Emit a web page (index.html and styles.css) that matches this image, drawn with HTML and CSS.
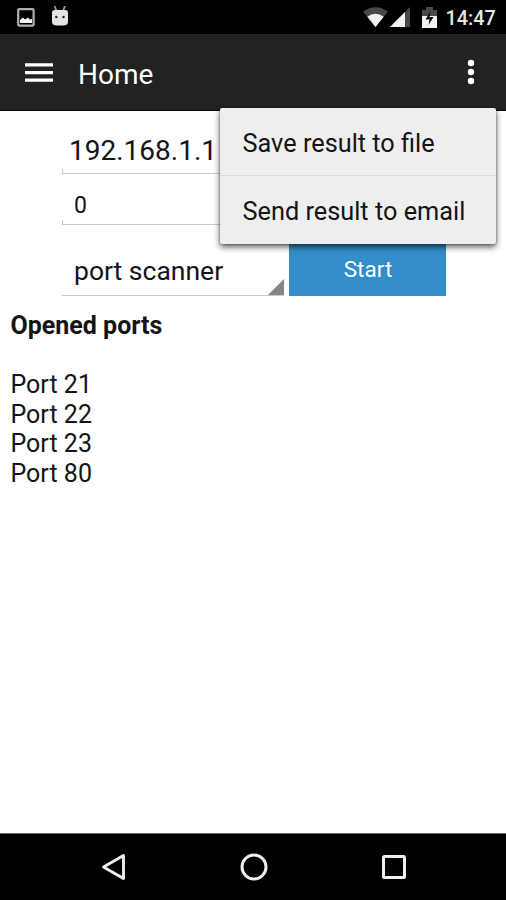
FILE: index.html
```html
<!DOCTYPE html>
<html lang="en">
<head>
<meta charset="utf-8">
<title>Home</title>
<link rel="stylesheet" href="styles.css">
</head>
<body>
<div class="screen">
  <header class="status">
    <div class="status-left">
      <svg width="18" height="19" viewBox="0 0 18 19"><rect x="1.2" y="1.2" width="15.4" height="16.4" rx="1" fill="none" stroke="#b0b0b0" stroke-width="2.200"/><path d="M3 15V12l3-2.500 2 2 3-2 1.500 2 2.500-.5V15z" fill="#f4f4f4"/></svg>
      <svg width="18" height="21" viewBox="0 0 18 21"><path d="M3.500 0l2 5M14 0l-2 5" stroke="#999" stroke-width="1.800"/><path d="M1 6.500Q1 4 4 4h10q3 0 3 2.500V16q0 3-4 3.500H5q-4-.5-4-3.500z" fill="#e4e4e4"/><circle cx="5.300" cy="11" r="1.200" fill="#222"/><circle cx="12.500" cy="11" r="1.200" fill="#222"/></svg>
    </div>
    <div class="status-right">
      <svg class="wifi" width="25" height="20" viewBox="0 0 25 20"><path d="M0 4.500Q12.500-4 25 4.500L12.500 20z" fill="#484848"/><path d="M4.300 9.700Q12.500 4 20.700 9.700L12.500 20z" fill="#f2f2f2"/></svg>
      <svg class="signal" width="20" height="20" viewBox="0 0 20 20"><path d="M0 20L20 0v20z" fill="#484848"/><path d="M0 20L15 5v15z" fill="#f2f2f2"/></svg>
      <svg class="battery" width="15" height="21" viewBox="0 0 15 21"><path d="M0 3h4V0h7v3h4v6H0z" fill="#484848"/><path d="M0 9h15v12H0z" fill="#f2f2f2"/><path d="M8.500 4L3.500 12.500h4L6.500 18l5-8h-4z" fill="#080808"/></svg>
      <span class="clock">14:47</span>
    </div>
  </header>
  <div class="toolbar">
    <svg class="menu-icon" width="28" height="19" viewBox="0 0 28 19"><path d="M0 1.800h28M0 9.600h28M0 17.200h28" stroke="#fff" stroke-width="3.200"/></svg>
    <h1 class="title">Home</h1>
    <svg class="more" width="8" height="26" viewBox="0 0 8 26"><g fill="#fff"><circle cx="4" cy="4" r="3.200"/><circle cx="4" cy="13" r="3.200"/><circle cx="4" cy="22" r="3.200"/></g></svg>
    <div class="popup">
      <div class="popup-item">Save result to file</div>
      <div class="popup-item second">Send result to email</div>
    </div>
  </div>
  <main class="content">
    <div class="form">
      <div class="field address"><span>192.168.1.1</span></div>
      <div class="field port"><span>0</span></div>
      <div class="actions">
        <div class="spinner"><span>port scanner</span><svg width="16" height="16" viewBox="0 0 16 16"><path d="M0 16L16 0v16z" fill="#858585"/></svg></div>
        <div class="start"><span>Start</span></div>
      </div>
    </div>
    <section class="results">
      <h2>Opened ports</h2>
      <p>Port 21</p>
      <p>Port 22</p>
      <p>Port 23</p>
      <p>Port 80</p>
    </section>
  </main>
  <nav class="nav">
    <svg width="25" height="28" viewBox="0 0 25 28"><path d="M2.500 14L22.500 2.500v23z" fill="none" stroke="#eee" stroke-width="2.900" stroke-linejoin="round"/></svg>
    <svg width="28" height="28" viewBox="0 0 28 28"><circle cx="14" cy="14" r="12" fill="none" stroke="#eee" stroke-width="3"/></svg>
    <svg width="26" height="28" viewBox="0 0 26 28"><rect x="2.500" y="3.500" width="21" height="21" rx="1" fill="none" stroke="#eee" stroke-width="3"/></svg>
  </nav>
</div>
</body>
</html>
```
FILE: styles.css
```css
* { box-sizing: border-box; }
body { margin: 0; font-family: Roboto, "Liberation Sans", sans-serif; color: #141414; }
svg { display: block; flex: none; }
h1, h2, p { margin: 0; font-weight: 400; }
.screen { width: 506px; height: 900px; display: flex; flex-direction: column; background: #fff; overflow: hidden; }
.status { height: 34px; flex: none; background: #000; display: flex; justify-content: space-between; padding: 0 10.500px 0 17px; }
.status-left { display: flex; gap: 16px; padding-top: 6px; }
.status-left svg:first-child { margin-top: 2px; }
.status-right { display: flex; padding-top: 7px; }
.signal { margin-left: 2px; }
.battery { margin-left: 12px; }
.clock { margin-left: 9px; width: 50px; font-size: 19.800px; line-height: 23px; font-weight: 500; color: #e6e6e6; white-space: nowrap; }
.toolbar { position: relative; height: 77px; flex: none; background: #222; border-bottom: 1px solid #080808; display: flex; align-items: center; padding: 0 31px 0 25px; }
.title { font-size: 28px; line-height: 34px; color: #fff; margin-left: 25px; padding-top: 5px; }
.more { margin-left: auto; }
.popup { position: absolute; left: 220px; top: 74px; width: 276px; height: 136px; background: #eee; border-radius: 2px; box-shadow: 0 3px 6px rgba(0,0,0,.65), 0 0 2px rgba(0,0,0,.5); z-index: 2; }
.popup-item { height: 67px; padding-left: 22.500px; line-height: 72px; font-size: 25.300px; white-space: nowrap; }
.second { border-top: 1px solid #dcdcdc; }
.content { flex: 1; }
.form { padding-left: 62px; width: 446px; }
.field { border-bottom: 1px solid #c8c8c8; position: relative; }
.field::before { content: ""; position: absolute; left: 0; bottom: 0; width: 1px; height: 4px; background: #c8c8c8; }
.address { height: 63px; padding: 23px 0 0 7px; font-size: 28px; line-height: 34px; }
.port { height: 51px; padding: 17px 0 0 12px; font-size: 23px; line-height: 30px; }
.actions { display: flex; gap: 5px; margin-top: 15px; height: 56px; }
.spinner { width: 222px; height: 56px; border-bottom: 1px solid #c8c8c8; display: flex; justify-content: space-between; align-items: flex-end; padding-left: 12px; font-size: 26.500px; line-height: 48px; white-space: nowrap; }
.start { flex: 1; background: #338dc8; color: #fff; display: flex; justify-content: center; padding: 13px 0 0 1px; font-size: 22.500px; line-height: 32px; }
.results { padding: 15px 10.500px 0; font-size: 25px; line-height: 29.600px; }
.results h2 { font-size: 25px; line-height: 30px; font-weight: 700; margin-bottom: 29px; }
.nav { height: 67px; flex: none; background: #000; border-top: 1px solid #666; display: flex; justify-content: space-between; align-items: center; padding: 0 99px 0 101px; }
```
